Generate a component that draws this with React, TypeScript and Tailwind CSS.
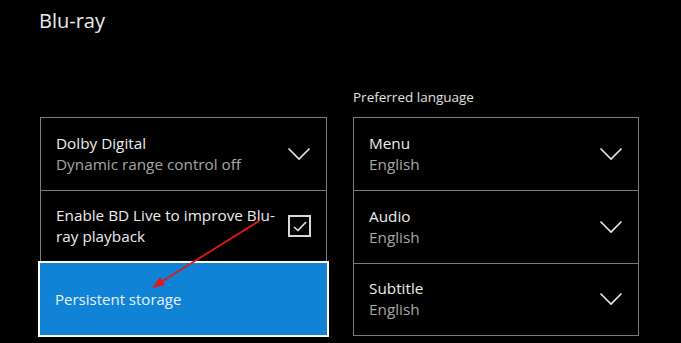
import React from 'react'

function Chevron() {
  return (
    <svg width="24" height="14" viewBox="0 0 24 14" className="shrink-0">
      <polyline points="1.5,1.5 12,12 22.5,1.5" fill="none" stroke="#e8e8e8" strokeWidth="1.6" />
    </svg>
  )
}

function CheckBox() {
  return (
    <div className="w-[23px] h-[22px] border-2 border-[#d8d8d8] flex items-center justify-center shrink-0">
      <svg width="14" height="11" viewBox="0 0 14 11">
        <polyline points="1,6 5,9.5 13,1" fill="none" stroke="#e8e8e8" strokeWidth="1.6" />
      </svg>
    </div>
  )
}

function Row({ title, sub, last }: { title: string; sub?: string; last?: boolean }) {
  return (
    <div className={`flex items-center justify-between pl-[15px] pr-[15px] ${last ? 'h-[71px] pb-[2px]' : 'h-[73px] border-b border-[#7c7c7c]'}`}>
      <div className="leading-[21px] text-[15.3px]">
        <p className="text-[#ececec]">{title}</p>
        {sub && <p className="text-[#a6a6a6]">{sub}</p>}
      </div>
      <Chevron />
    </div>
  )
}

export default function App() {
  return (
    <div
      className="w-[681px] h-[343px] bg-black relative overflow-hidden"
      style={{ fontFamily: '"Open Sans", "Noto Sans", sans-serif' }}
    >
      <h1 className="pl-[39px] pt-[6px] text-[20px] text-[#ececec] leading-[29px]">Blu-ray</h1>

      <div className="flex gap-[26px] pl-[40px] mt-[53px]">
        {/* Left column */}
        <div className="w-[287px] mt-[29px]">
          <div className="border border-[#7c7c7c] border-b-0">
            <Row title="Dolby Digital" sub="Dynamic range control off" />
            <div className="h-[70px] flex items-center justify-between pl-[15px] pr-[15px]">
              <p className="text-[15.3px] leading-[21px] text-[#ececec] w-[225px]">
                Enable BD Live to improve Blu-ray playback
              </p>
              <CheckBox />
            </div>
          </div>
          <div className="-mx-[2px] h-[76px] bg-[#1183d6] border-2 border-white flex items-center pl-[15px]">
            <p className="text-[15px] text-[#e9f3fb]">Persistent storage</p>
          </div>
        </div>

        {/* Right column */}
        <div className="w-[286px]">
          <p className="text-[13.5px] text-[#e0e0e0] leading-[18px] h-[29px]">Preferred language</p>
          <div className="border border-[#7c7c7c]">
            <Row title="Menu" sub="English" />
            <Row title="Audio" sub="English" />
            <Row title="Subtitle" sub="English" last />
          </div>
        </div>
      </div>

      {/* annotation arrow */}
      <svg className="absolute left-0 top-0 pointer-events-none" width="681" height="343">
        <line x1="259" y1="221" x2="158" y2="284" stroke="#e01818" strokeWidth="1.8" />
        <polygon points="152,288 160,277 165,285" fill="#e01818" />
      </svg>
    </div>
  )
}
